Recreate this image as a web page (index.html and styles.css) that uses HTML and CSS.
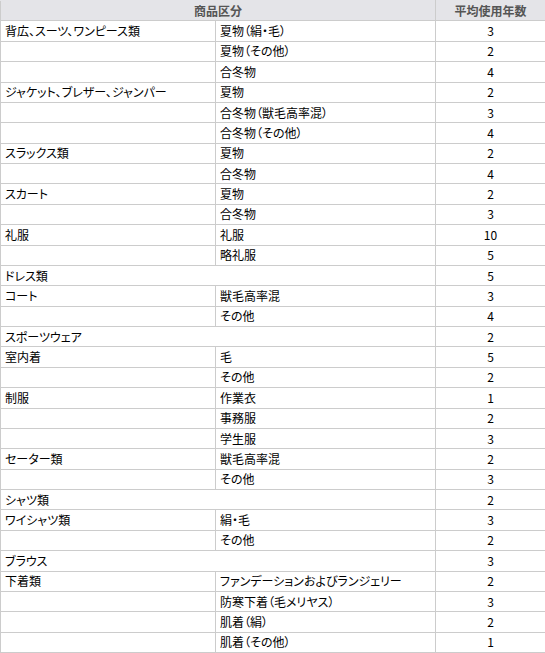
FILE: index.html
```html
<!DOCTYPE html>
<html lang="ja">
<head>
<meta charset="utf-8">
<link rel="stylesheet" href="styles.css">
</head>
<body>
<table class="tbl">
  <colgroup>
    <col class="c1"><col class="c2"><col class="c3">
  </colgroup>
  <thead>
    <tr><th colspan="2">商品区分</th><th>平均使用年数</th></tr>
  </thead>
  <tbody>
    <tr><td>背広、スーツ、ワンピース類</td><td>夏物（絹・毛）</td><td class="n">3</td></tr>
    <tr><td></td><td>夏物（その他）</td><td class="n">2</td></tr>
    <tr><td></td><td>合冬物</td><td class="n">4</td></tr>
    <tr><td>ジャケット、ブレザー、ジャンパー</td><td>夏物</td><td class="n">2</td></tr>
    <tr><td></td><td>合冬物（獣毛高率混）</td><td class="n">3</td></tr>
    <tr><td></td><td>合冬物（その他）</td><td class="n">4</td></tr>
    <tr><td>スラックス類</td><td>夏物</td><td class="n">2</td></tr>
    <tr><td></td><td>合冬物</td><td class="n">4</td></tr>
    <tr><td>スカート</td><td>夏物</td><td class="n">2</td></tr>
    <tr><td></td><td>合冬物</td><td class="n">3</td></tr>
    <tr><td>礼服</td><td>礼服</td><td class="n">10</td></tr>
    <tr><td></td><td>略礼服</td><td class="n">5</td></tr>
    <tr><td colspan="2">ドレス類</td><td class="n">5</td></tr>
    <tr><td>コート</td><td>獣毛高率混</td><td class="n">3</td></tr>
    <tr><td></td><td>その他</td><td class="n">4</td></tr>
    <tr><td colspan="2">スポーツウェア</td><td class="n">2</td></tr>
    <tr><td>室内着</td><td>毛</td><td class="n">5</td></tr>
    <tr><td></td><td>その他</td><td class="n">2</td></tr>
    <tr><td>制服</td><td>作業衣</td><td class="n">1</td></tr>
    <tr><td></td><td>事務服</td><td class="n">2</td></tr>
    <tr><td></td><td>学生服</td><td class="n">3</td></tr>
    <tr><td>セーター類</td><td>獣毛高率混</td><td class="n">2</td></tr>
    <tr><td></td><td>その他</td><td class="n">3</td></tr>
    <tr><td colspan="2">シャツ類</td><td class="n">2</td></tr>
    <tr><td>ワイシャツ類</td><td>絹・毛</td><td class="n">3</td></tr>
    <tr><td></td><td>その他</td><td class="n">2</td></tr>
    <tr><td colspan="2">ブラウス</td><td class="n">3</td></tr>
    <tr><td>下着類</td><td>ファンデーションおよびランジェリー</td><td class="n">2</td></tr>
    <tr><td></td><td>防寒下着（毛メリヤス）</td><td class="n">3</td></tr>
    <tr><td></td><td>肌着（絹）</td><td class="n">2</td></tr>
    <tr><td></td><td>肌着（その他）</td><td class="n">1</td></tr>
  </tbody>
</table>
</body>
</html>
```
FILE: styles.css
```css
html, body {
  margin: 0;
  padding: 0;
  background: #ffffff;
}
.tbl {
  width: 545px;
  border-collapse: collapse;
  table-layout: fixed;
  font-family: "Noto Sans CJK JP", "Liberation Sans", sans-serif;
  font-size: 12px;
  font-feature-settings: "palt";
  color: #000;
}
.c1 { width: 215px; }
.c2 { width: 220px; }
.c3 { width: 110px; }
.tbl th, .tbl td {
  border: 1px solid #cccccc;
  height: 20.375px;
  padding: 0 4px;
  line-height: 14px;
  box-sizing: border-box;
  text-align: left;
  vertical-align: middle;
  white-space: nowrap;
}
.tbl th {
  background: #e4e4e8;
  color: #555;
  font-weight: bold;
  text-align: center;
  border-top-color: #e4e4e8;
}
.tbl td.n {
  text-align: center;
}
```
